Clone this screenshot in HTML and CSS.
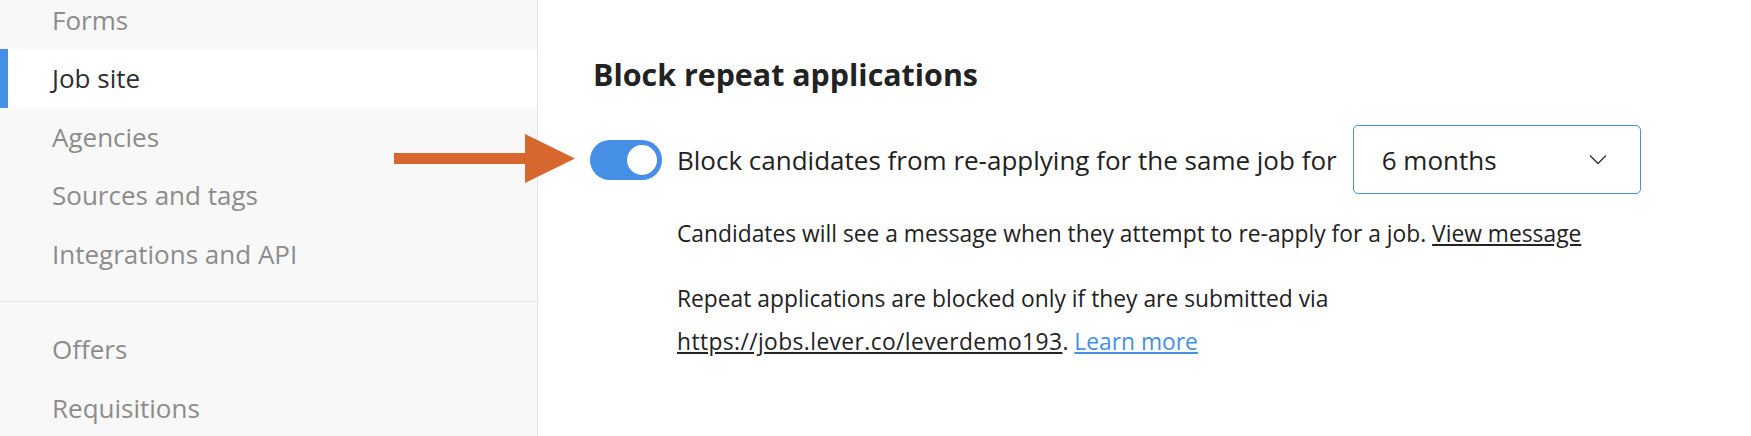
FILE: index.html
```html
<!DOCTYPE html>
<html lang="en">
<head>
  <meta charset="UTF-8">
  <title>Job site settings</title>
  <link rel="stylesheet" href="styles.css">
</head>
<body>
  <div class="page">
    <!-- settings navigation -->
    <nav class="sidebar">
      <ul class="nav-group first">
        <li class="nav-item">Forms</li>
        <li class="nav-item active">Job site</li>
        <li class="nav-item">Agencies</li>
        <li class="nav-item">Sources and tags</li>
        <li class="nav-item">Integrations and API</li>
      </ul>
      <ul class="nav-group">
        <li class="nav-item">Offers</li>
        <li class="nav-item">Requisitions</li>
      </ul>
    </nav>

    <!-- settings panel -->
    <main class="content">
      <h2 class="section-title">Block repeat applications</h2>

      <div class="setting-row">
        <div class="toggle on"><span class="knob"></span></div>
        <span class="setting-label">Block candidates from re-applying for the same job for</span>
        <div class="select">
          <span class="select-value">6 months</span>
          <svg class="chevron" width="18" height="11" viewBox="0 0 18 11" fill="none" xmlns="http://www.w3.org/2000/svg">
            <path d="M1 1.5 L9 9.5 L17 1.5" stroke="#333" stroke-width="1.4"/>
          </svg>
        </div>
      </div>

      <div class="setting-notes">
        <p>Candidates will see a message when they attempt to re-apply for a job. <a class="link-dark" href="#">View message</a></p>
        <p>Repeat applications are blocked only if they are submitted via<br><a class="link-dark job-url" href="#">https://jobs.lever.co/leverdemo193</a>. <a class="link-blue" href="#">Learn more</a></p>
      </div>
    </main>

    <!-- callout arrow drawn over the page -->
    <svg class="pointer-arrow" width="181" height="49" viewBox="0 0 181 49" xmlns="http://www.w3.org/2000/svg">
      <rect x="0" y="19" width="132" height="11" fill="#d6682f"/>
      <polygon points="131,0 181,24.5 131,49" fill="#d6682f"/>
    </svg>
  </div>
</body>
</html>
```

FILE: styles.css
```css
/* base */
html, body {
  margin: 0;
  padding: 0;
  background: #fff;
  font-family: "Open Sans", "Noto Sans", sans-serif;
  color: #222;
}
.page {
  position: relative;
  display: flex;
  height: 436px;
  overflow: hidden;
}

/* sidebar */
.sidebar {
  width: 537px;
  flex-shrink: 0;
  background-color: #f8f8f8;
  border-right: 1px solid #e4e4e4;
}
.nav-group {
  list-style: none;
  margin: 0;
  padding: 0;
}
.nav-group.first {
  margin-top: -9.5px;
  padding-bottom: 18px;
  border-bottom: 1px solid #e2e2e2;
}
.nav-group + .nav-group {
  padding-top: 18px;
}
.nav-item {
  display: flex;
  align-items: center;
  height: 58.5px;
  padding-left: 52px;
  font-size: 26px;
  color: #8c8c8c;
}
.nav-item.active {
  background-color: #fff;
  color: #2e2e2e;
  box-shadow: inset 8px 0 0 #4590e6;
}

/* content */
.content {
  flex: 1;
  padding: 57px 0 0 55px;
}
.section-title {
  margin: 0 0 32px;
  font-size: 30.4px;
  line-height: 36px;
  font-weight: 700;
  color: #222;
}
.setting-row {
  display: flex;
  align-items: center;
  height: 69px;
  margin-left: -3px;
}
.toggle {
  position: relative;
  width: 72px;
  height: 40px;
  border-radius: 20px;
  background-color: #c8c8c8;
  flex-shrink: 0;
}
.toggle.on {
  background-color: #4590e6;
}
.toggle .knob {
  position: absolute;
  top: 5px;
  right: 5px;
  width: 30px;
  height: 30px;
  border-radius: 50%;
  background: #fff;
}
.setting-label {
  margin-left: 15px;
  font-size: 26px;
  color: #222;
}
.select {
  display: flex;
  align-items: center;
  justify-content: space-between;
  box-sizing: border-box;
  width: 288px;
  height: 69px;
  margin-left: 16px;
  padding: 0 33px 0 28px;
  border: 1px solid #4590e6;
  border-radius: 5px;
  background: #fff;
}
.select-value {
  font-size: 26px;
  color: #222;
}
.chevron {
  display: block;
}

/* notes under the toggle */
.setting-notes {
  margin: 18px 0 0 84px;
}
.setting-notes p {
  margin: 0 0 22px;
  font-size: 22.8px;
  line-height: 43px;
  color: #222;
}
.link-dark {
  color: #222;
  text-decoration: underline;
}
.job-url {
  letter-spacing: 0.4px;
}
.link-blue {
  color: #4590e6;
  text-decoration: underline;
}

/* annotation arrow */
.pointer-arrow {
  position: absolute;
  left: 394px;
  top: 134px;
}
```
